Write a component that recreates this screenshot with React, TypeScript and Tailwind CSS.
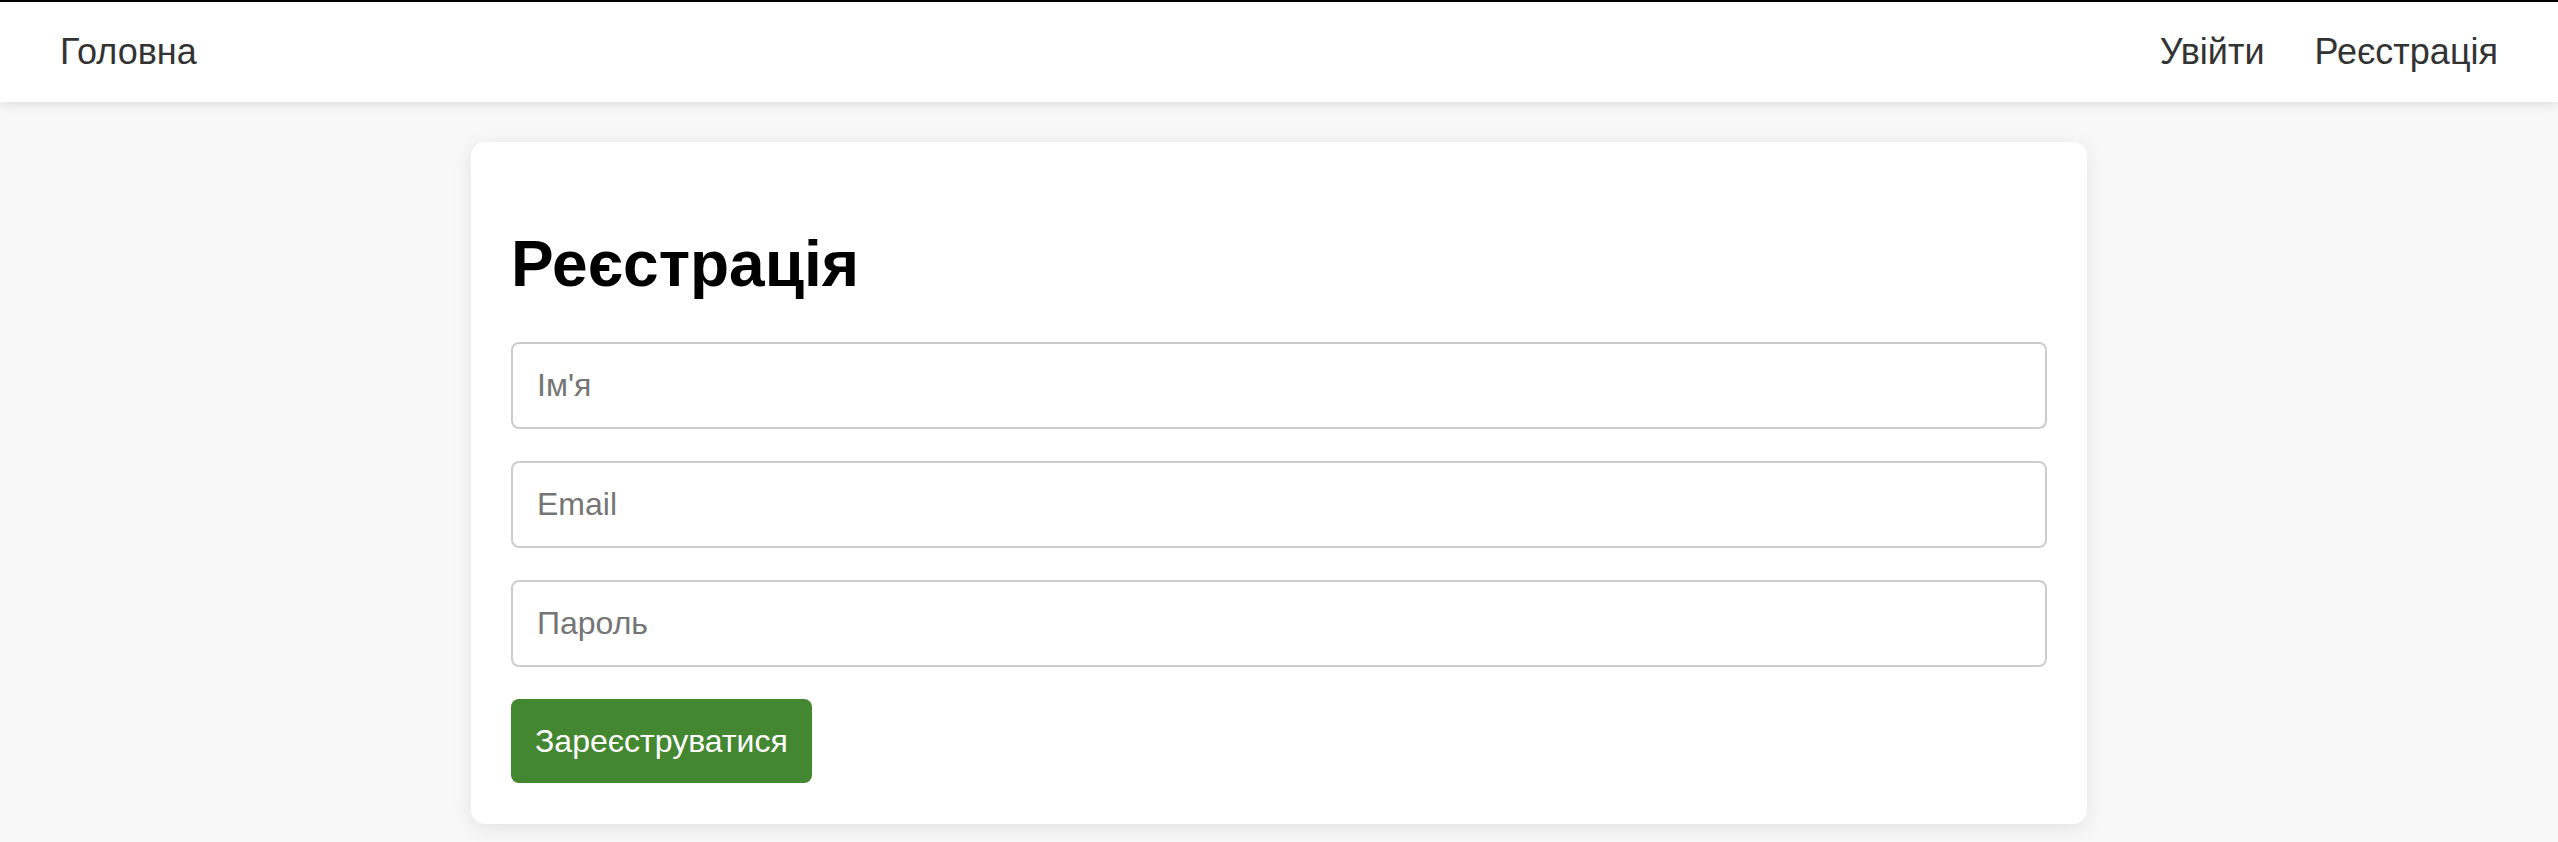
import { useState } from "react";

export default function App() {
  const [name, setName] = useState("");
  const [email, setEmail] = useState("");
  const [password, setPassword] = useState("");

  return (
    <div
      className="min-h-screen bg-[#f8f8f8] text-[#333]"
      style={{ fontFamily: '"Liberation Sans", Arial, sans-serif' }}
    >
      {/* Top nav */}
      <nav className="h-[102px] bg-white border-t-2 border-black shadow-[0_2px_10px_rgba(0,0,0,0.12)] flex items-center justify-between px-[60px] relative z-10">
        <a href="#" className="text-[36px] text-[#333]">
          Головна
        </a>
        <div className="flex items-center gap-[50px]">
          <a href="#" className="text-[36px] text-[#333]">
            Увійти
          </a>
          <a href="#" className="text-[36px] text-[#333]">
            Реєстрація
          </a>
        </div>
      </nav>

      {/* Register card */}
      <div className="flex justify-center pt-[40px]">
        <form
          className="w-[1616px] bg-white rounded-[14px] shadow-[0_4px_20px_rgba(0,0,0,0.09)] px-[40px] pt-[40px] pb-[41px]"
          onSubmit={(e) => e.preventDefault()}
        >
          <h1 className="text-[64px] leading-[74px] font-bold text-black mt-[45px] mb-[41px]">
            Реєстрація
          </h1>
          <input
            type="text"
            placeholder="Ім'я"
            value={name}
            onChange={(e) => setName(e.target.value)}
            className="block w-full h-[87px] mb-[32px] px-6 text-[32px] border-2 border-[#cccccc] rounded-[8px] placeholder:text-[#757575] outline-none"
          />
          <input
            type="email"
            placeholder="Email"
            value={email}
            onChange={(e) => setEmail(e.target.value)}
            className="block w-full h-[87px] mb-[32px] px-6 text-[32px] border-2 border-[#cccccc] rounded-[8px] placeholder:text-[#757575] outline-none"
          />
          <input
            type="password"
            placeholder="Пароль"
            value={password}
            onChange={(e) => setPassword(e.target.value)}
            className="block w-full h-[87px] mb-[32px] px-6 text-[32px] border-2 border-[#cccccc] rounded-[8px] placeholder:text-[#757575] outline-none"
          />
          <button
            type="submit"
            className="h-[84px] px-[24px] bg-[#438731] text-white text-[32px] rounded-[8px]"
          >
            Зареєструватися
          </button>
        </form>
      </div>
    </div>
  );
}
